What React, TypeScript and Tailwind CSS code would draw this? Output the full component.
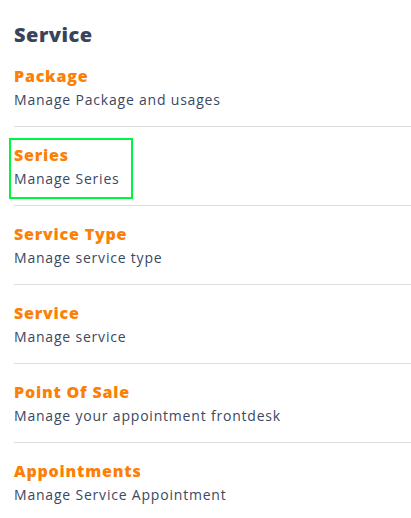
import React from "react";

interface MenuItem {
  title: string;
  description: string;
  focused?: boolean;
}

const items: MenuItem[] = [
  { title: "Package", description: "Manage Package and usages" },
  { title: "Series", description: "Manage Series", focused: true },
  { title: "Service Type", description: "Manage service type" },
  { title: "Service", description: "Manage service" },
  { title: "Point Of Sale", description: "Manage your appointment frontdesk" },
  { title: "Appointments", description: "Manage Service Appointment" },
];

export default function App() {
  return (
    <div
      className="min-h-[518px] w-[411px] bg-white pt-[21px]"
      style={{ fontFamily: '"Open Sans", "Liberation Sans", sans-serif' }}
    >
      <h2 className="px-[14px] text-[20px] font-extrabold leading-[28px] tracking-[0.5px] text-[#38445a]">Service</h2>
      <div className="ml-[14px] mt-[-1px]">
        {items.map((item, idx) => (
          <div
            key={item.title}
            className={`pt-[13px] pb-[8px] ${idx < items.length - 1 ? "border-b border-[#dddddd]" : ""}`}
          >
            <a
              href="#"
              className={`-ml-[3px] inline-block pl-[3px] pr-[11px] pt-[3px] pb-[6px] ${
                item.focused ? "ring-2 ring-[#00f53d]" : ""
              }`}
            >
              <div className="text-[16px] font-extrabold leading-[24px] tracking-[0.8px] text-[#fb8005]">{item.title}</div>
              <div className="text-[14px] leading-[24px] tracking-[0.8px] text-[#3b4862]">{item.description}</div>
            </a>
          </div>
        ))}
      </div>
    </div>
  );
}
